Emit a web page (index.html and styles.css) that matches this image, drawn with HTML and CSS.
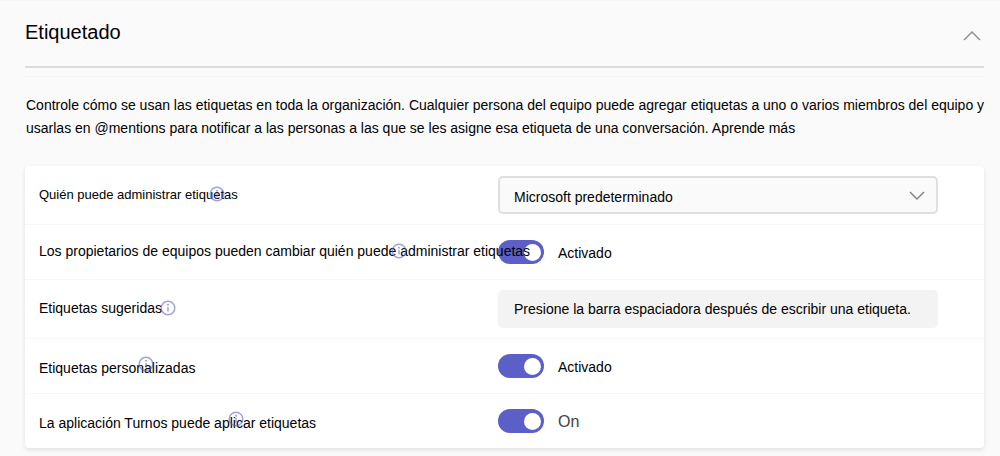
FILE: index.html
```html
<!DOCTYPE html>
<html lang="es">
<head>
<meta charset="utf-8">
<meta name="viewport" content="width=device-width, initial-scale=1">
<title>Etiquetado</title>
<link rel="stylesheet" href="styles.css">
</head>
<body>
<svg class="sprite" aria-hidden="true">
  <symbol id="info" viewBox="0 0 16 16">
    <circle cx="8" cy="8" r="6.8" fill="none" stroke="currentColor" stroke-width="1.5"/>
    <circle cx="8" cy="4.8" r="1" fill="currentColor"/>
    <path d="M8 7v4.5" fill="none" stroke="currentColor" stroke-width="1.5"/>
  </symbol>
</svg>
<main class="section">
  <header class="section-header">
    <h1 class="title">Etiquetado</h1>
    <button class="collapse" type="button" aria-label="Contraer" aria-expanded="true">
      <svg class="collapse-icon" viewBox="0 0 18 10" aria-hidden="true"><path d="M1 9l8-8 8 8"/></svg>
    </button>
  </header>
  <div class="intro">
    <p class="description">Controle cómo se usan las etiquetas en toda la organización. Cualquier persona del equipo puede agregar etiquetas a uno o varios miembros del equipo y usarlas en @mentions para notificar a las personas a las que se les asigne esa etiqueta de una conversación. <a class="link" href="#">Aprende más</a></p>
  </div>
  <div class="card">
    <div class="row">
      <div class="label label-small">
        <label for="manage">Quién puede administrar etiquetas</label>
        <svg class="info info-manage" aria-hidden="true"><use href="#info"/></svg>
      </div>
      <div class="select-box">
        <select class="select" id="manage"><option>Microsoft predeterminado</option></select>
        <svg class="select-icon" viewBox="0 0 16 9" aria-hidden="true"><path d="M1 1l7 7 7-7"/></svg>
      </div>
    </div>
    <div class="row row-short">
      <div class="label">
        <label for="owners">Los propietarios de equipos pueden cambiar quién puede administrar etiquetas</label>
        <svg class="info info-owners" aria-hidden="true"><use href="#info"/></svg>
      </div>
      <div class="control">
        <input class="toggle" type="checkbox" role="switch" id="owners" checked>
        <span class="state">Activado</span>
      </div>
    </div>
    <div class="row row-tall">
      <div class="label">
        <label for="suggested">Etiquetas sugeridas</label>
        <svg class="info info-suggested" aria-hidden="true"><use href="#info"/></svg>
      </div>
      <input class="text-box" type="text" id="suggested" placeholder="Presione la barra espaciadora después de escribir una etiqueta.">
    </div>
    <div class="row row-short">
      <div class="label label-low">
        <label for="custom">Etiquetas personalizadas</label>
        <svg class="info info-custom" aria-hidden="true"><use href="#info"/></svg>
      </div>
      <div class="control">
        <input class="toggle" type="checkbox" role="switch" id="custom" checked>
        <span class="state">Activado</span>
      </div>
    </div>
    <div class="row row-short">
      <div class="label label-low">
        <label for="shifts">La aplicación Turnos puede aplicar etiquetas</label>
        <svg class="info info-shifts" aria-hidden="true"><use href="#info"/></svg>
      </div>
      <div class="control">
        <input class="toggle" type="checkbox" role="switch" id="shifts" checked>
        <span class="state state-large">On</span>
      </div>
    </div>
  </div>
</main>
</body>
</html>
```
FILE: styles.css
```css
* {
  box-sizing: border-box;
}

body {
  margin: 0;
  background: #fafafa;
  color: #000;
  font: 14px/23px "Liberation Sans", Arial, sans-serif;
}

.sprite {
  display: none;
}

.section {
  border-top: 1px solid #f5f5f5;
  padding: 0 16px 8px 25px;
}

.section-header {
  display: flex;
  align-items: center;
  justify-content: space-between;
  height: 67px;
  border-bottom: 2px solid #dcdcdc;
}

.title {
  margin: 0;
  padding-bottom: 2px;
  font-size: 20px;
  font-weight: 400;
}

.collapse {
  display: flex;
  margin-top: 4px;
  padding: 0 3px;
  border: 0;
  background: none;
}

.collapse-icon {
  width: 18px;
  height: 10px;
  fill: none;
  stroke: #929292;
  stroke-width: 1.5;
}

.intro {
  margin: 8px 0 26px;
  border-top: 1px solid #f5f5f5;
  padding: 17px 0 0 1px;
}

.description {
  margin: 0 -8px 0 0;
}

.link {
  color: inherit;
  text-decoration: none;
}

.card {
  border-radius: 4px;
  background: #fff;
  box-shadow: 0 2px 5px rgba(0, 0, 0, 0.1);
}

.row {
  display: grid;
  grid-template-columns: minmax(0, 459fr) minmax(0, 440fr);
  align-items: center;
  min-height: 58px;
  padding: 0 46px 0 14px;
}

.row-short {
  min-height: 55px;
}

.row-tall {
  min-height: 59px;
}

.row + .row {
  border-top: 1px solid #f7f7f7;
}

.label {
  position: relative;
  z-index: 1;
  padding-bottom: 2px;
  white-space: nowrap;
}

.label-small {
  font-size: 13px;
}

.label-low {
  padding: 4px 0 0;
}

.info {
  position: absolute;
  top: 3px;
  width: 16px;
  height: 16px;
  color: #6264c7;
  opacity: 0.6;
}

.info-manage {
  left: 170px;
}

.info-owners {
  left: 352px;
}

.info-suggested {
  left: 121px;
}

.info-custom {
  left: 99px;
}

.info-shifts {
  left: 189px;
}

.select-box {
  display: grid;
  align-items: center;
}

.select,
.select-icon {
  grid-area: 1 / 1;
}

.select,
.text-box {
  width: 100%;
  height: 38px;
  border: 2px solid #dfdfdf;
  border-radius: 5px;
  padding: 4px 14px 0;
  background: #fafafa;
  color: #000;
  font: inherit;
  appearance: none;
}

.select-icon {
  justify-self: end;
  width: 16px;
  height: 9px;
  margin-right: 13px;
  fill: none;
  stroke: #808080;
  stroke-width: 1.4;
  pointer-events: none;
}

.text-box {
  border-color: #f3f3f3;
  padding-top: 0;
  background: #f3f3f3;
}

.text-box::placeholder {
  color: #000;
  opacity: 1;
}

.control {
  display: flex;
  align-items: center;
  gap: 14px;
}

.toggle {
  display: flex;
  align-items: center;
  justify-content: flex-end;
  width: 46px;
  height: 24px;
  margin: 0;
  border-radius: 12px;
  padding: 0 3px;
  background: #5b5fc7;
  appearance: none;
}

.toggle:not(:checked) {
  justify-content: flex-start;
  background: #8a8a8a;
}

.toggle::before {
  width: 17px;
  height: 17px;
  border-radius: 50%;
  background: #fff;
  content: "";
}

.state {
  padding-top: 2px;
}

.state-large {
  padding-top: 0;
  color: #424242;
  font-size: 16px;
}
```
